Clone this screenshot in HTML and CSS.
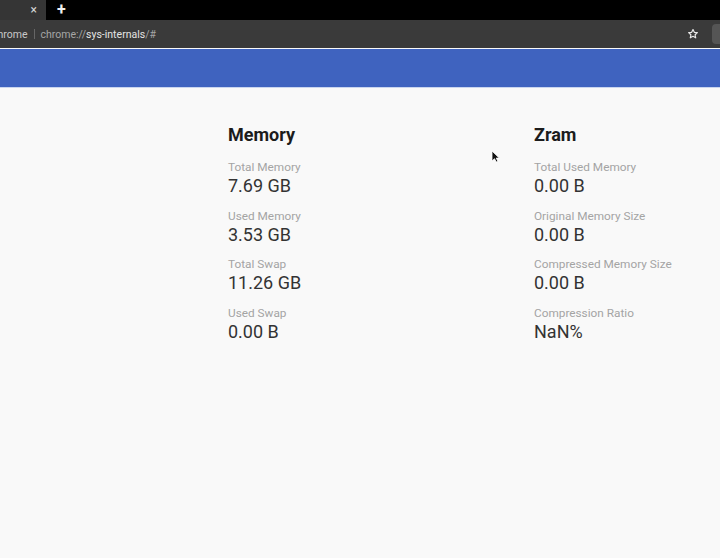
FILE: index.html
```html
<!DOCTYPE html>
<html lang="en">
<head>
    <meta charset="UTF-8">
    <meta name="viewport" content="width=device-width, initial-scale=1.0">
    <title>sys-internals</title>
    <link rel="stylesheet" href="styles.css">
</head>
<body>
    <div class="tabbar">
        <div class="tab">
            <span class="tabClose">&#215;</span>
        </div>
        <span class="newTab">+</span>
    </div>
    <div class="toolbar">
        <div class="omnibox">
            <span class="site">chrome</span>
            <span class="sep"></span>
            <span class="url">chrome://<b>sys-internals</b>/#</span>
        </div>
        <svg class="star" width="12" height="12" viewBox="0 0 24 24">
            <path d="M12 3l2.6 5.6 6.1.7-4.5 4.2 1.2 6.1L12 16.6l-5.4 3 1.2-6.1-4.5-4.2 6.1-.7z" fill="none" stroke="#e8e8e8" stroke-width="2.4" stroke-linejoin="round"/>
        </svg>
        <span class="edge"></span>
    </div>
    <div class="header"></div>

    <div class="content">
        <div class="column">
            <h3>Memory</h3>
            <div class="item">
                <div class="label">Total Memory</div>
                <div class="value">7.69 GB</div>
            </div>
            <div class="item">
                <div class="label">Used Memory</div>
                <div class="value">3.53 GB</div>
            </div>
            <div class="item">
                <div class="label">Total Swap</div>
                <div class="value">11.26 GB</div>
            </div>
            <div class="item">
                <div class="label">Used Swap</div>
                <div class="value">0.00 B</div>
            </div>
        </div>
        <div class="column">
            <h3>Zram</h3>
            <div class="item">
                <div class="label">Total Used Memory</div>
                <div class="value">0.00 B</div>
            </div>
            <div class="item">
                <div class="label">Original Memory Size</div>
                <div class="value">0.00 B</div>
            </div>
            <div class="item">
                <div class="label">Compressed Memory Size</div>
                <div class="value">0.00 B</div>
            </div>
            <div class="item">
                <div class="label">Compression Ratio</div>
                <div class="value">NaN%</div>
            </div>
        </div>
        <svg class="cursor" width="9" height="13" viewBox="0 0 9 13">
            <path d="M1 1v10l2.5-2.3L5.3 12l1.6-.7-1.7-3.2H8.3z" fill="#111" stroke="#fff" stroke-width="0.8"/>
        </svg>
    </div>
</body>
</html>
```

FILE: styles.css
```css
html, body{
    margin: 0;
    padding: 0;
    height: 100%;
    background-color: #f9f9f9;
    font-family: Roboto, "Liberation Sans", sans-serif;
    overflow: hidden;
}
.tabbar{
    height: 20px;
    background-color: #000;
    display: flex;
    align-items: center;
}
.tab{
    width: 46px;
    height: 20px;
    background-color: #353535;
    display: flex;
    justify-content: flex-end;
    align-items: center;
}
.tabClose{
    color: #d8d8d8;
    font-size: 12px;
    margin-right: 9px;
    line-height: 20px;
}
.newTab{
    color: #f0f0f0;
    font-size: 16px;
    font-weight: bold;
    margin-left: 11px;
    line-height: 18px;
}
.toolbar{
    height: 28px;
    background-color: #3a3a3a;
    display: flex;
    align-items: center;
}
.omnibox{
    flex: 1;
    display: flex;
    align-items: center;
    margin-left: -8px;
    font-size: 10.5px;
    color: #a6a6a6;
}
.site{
    color: #c8c8c8;
}
.sep{
    width: 1px;
    height: 10px;
    background-color: #666;
    margin: 0 6px;
}
.url b{
    font-weight: normal;
    color: #e4e4e4;
}
.star{
    margin-right: 13px;
}
.edge{
    width: 8px;
    height: 20px;
    border-radius: 4px 0 0 4px;
    background-color: #555;
}
.header{
    height: 38px;
    margin-top: 1px;
    background-color: #3f63bf;
    border-bottom: 1px solid #c9d5ef;
}
.content{
    position: relative;
    display: grid;
    grid-template-columns: 306px 180px;
    padding-left: 228px;
    padding-top: 36px;
}
.column h3{
    margin: 0 0 14px 0;
    font-size: 18px;
    line-height: 22px;
    font-weight: bold;
    color: #1c1c1c;
}
.item{
    margin-bottom: 12.5px;
}
.label{
    font-size: 11.8px;
    line-height: 15px;
    color: #a4a4a4;
}
.value{
    font-size: 18px;
    line-height: 21px;
    color: #333;
}
.cursor{
    position: absolute;
    left: 491px;
    top: 62px;
}
```
